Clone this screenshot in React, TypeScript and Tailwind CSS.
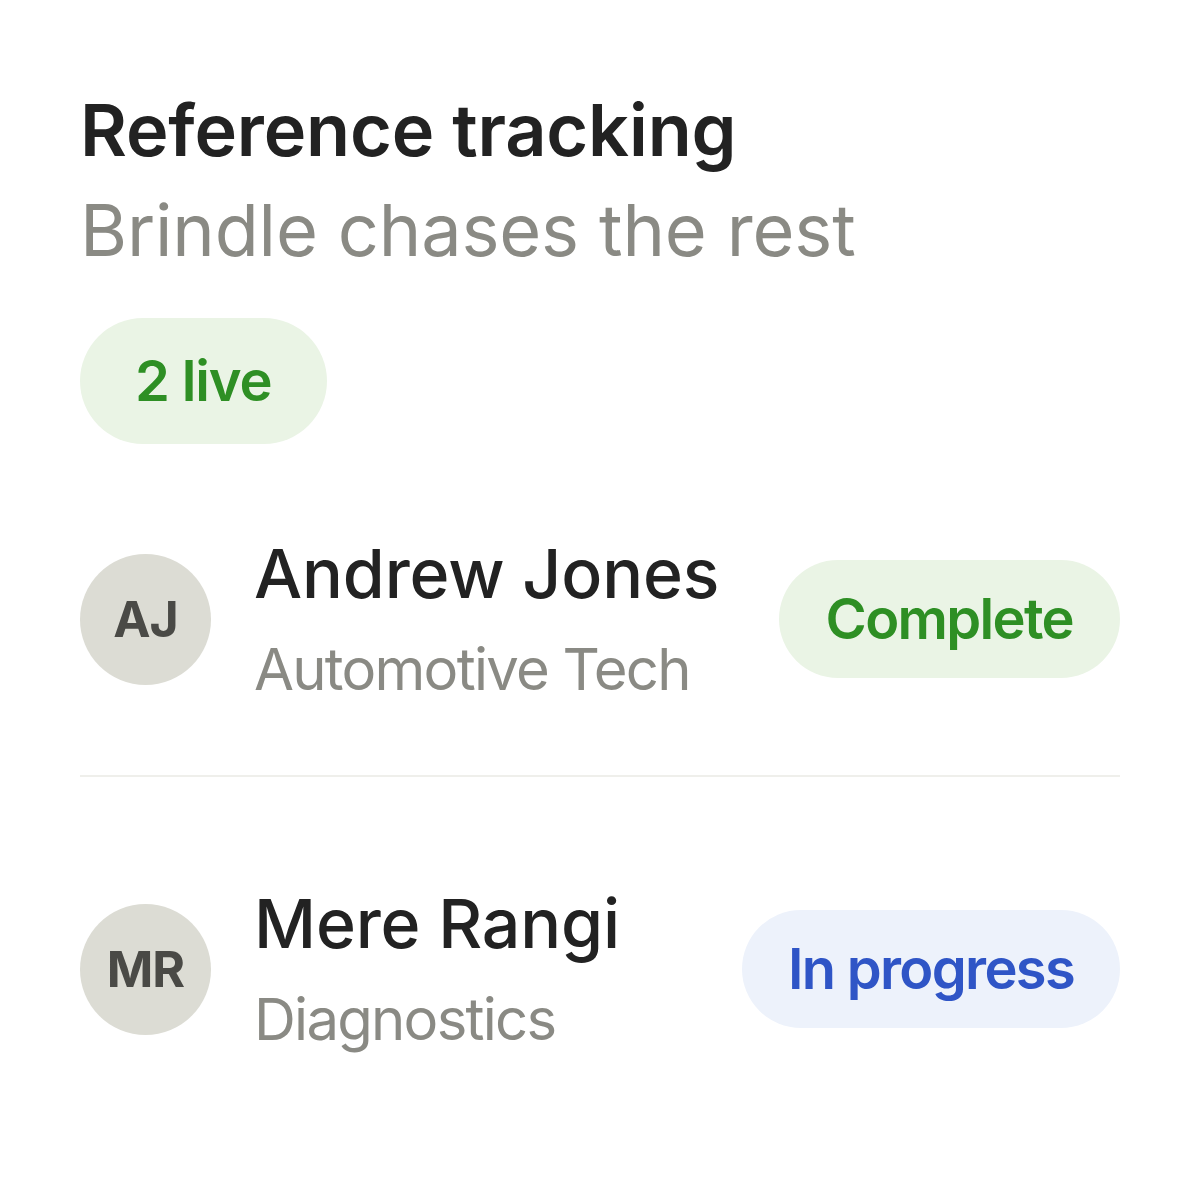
import React from 'react';

type Person = {
  initials: string;
  name: string;
  role: string;
  status: 'complete' | 'progress';
};

const people: Person[] = [
  { initials: 'AJ', name: 'Andrew Jones', role: 'Automotive Tech', status: 'complete' },
  { initials: 'MR', name: 'Mere Rangi', role: 'Diagnostics', status: 'progress' },
];

const StatusPill: React.FC<{ status: Person['status'] }> = ({ status }) =>
  status === 'complete' ? (
    <span className="rounded-full bg-[#eaf4e5] px-[47px] py-[24px] text-[56px] font-semibold leading-[70px] tracking-[-0.03em] text-[#2e8f24]">
      Complete
    </span>
  ) : (
    <span className="rounded-full bg-[#edf2fb] px-[46px] py-[24px] text-[56px] font-semibold leading-[70px] tracking-[-0.03em] text-[#2f55c6]">
      In progress
    </span>
  );

export default function App() {
  return (
    <div className="min-h-[1200px] w-[1200px] bg-white p-[80px] font-['Inter',sans-serif] tracking-[-0.01em]">
      <h1 className="text-[72px] font-semibold leading-[100px] text-[#222222]">Reference tracking</h1>
      <p className="text-[72px] leading-[100px] text-[#8a8a84]">Brindle chases the rest</p>

      <div className="mt-[38px] flex">
        <span className="rounded-full bg-[#eaf4e5] px-[55px] py-[27px] text-[56px] font-semibold leading-[72px] tracking-[-0.02em] text-[#2e8f24]">
          2 live
        </span>
      </div>

      <div className="mt-[87px]">
        {people.map((p, i) => (
          <div
            key={p.initials}
            className={
              i === 0
                ? 'flex items-center justify-between border-b-2 border-[#efefeb] pb-[68px]'
                : 'flex items-center justify-between pt-[104px]'
            }
          >
            <div className="flex items-center gap-[43px]">
              <div className="flex h-[131px] w-[131px] items-center justify-center rounded-full bg-[#dcdcd4] text-[50px] font-bold tracking-[-0.02em] text-[#4a4a46]">
                {p.initials}
              </div>
              <div className="flex flex-col">
                <span className="text-[68px] font-medium leading-[84px] text-[#222222]">{p.name}</span>
                <span className="mt-[16px] text-[58px] leading-[76px] tracking-[-0.03em] text-[#8a8a84]">{p.role}</span>
              </div>
            </div>
            <StatusPill status={p.status} />
          </div>
        ))}
      </div>
    </div>
  );
}
